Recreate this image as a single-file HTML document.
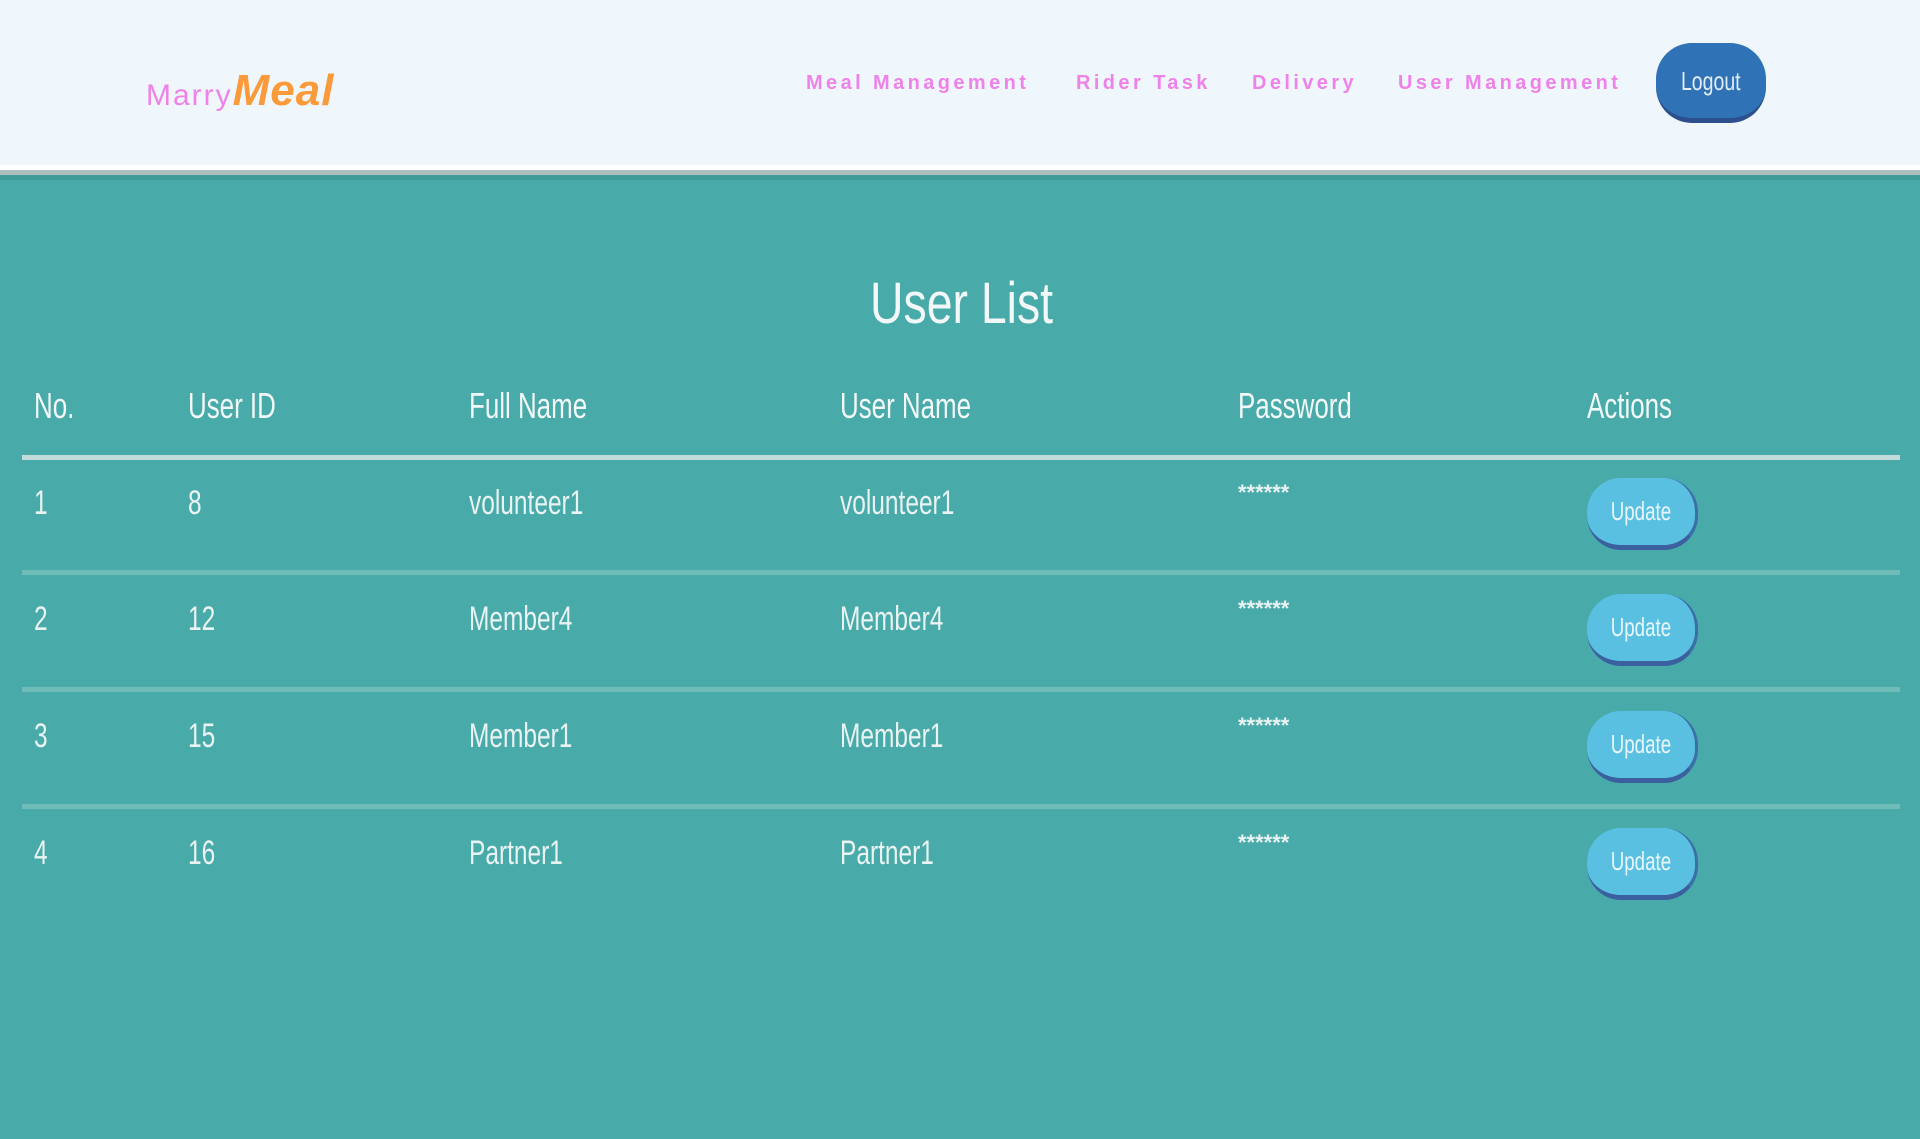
<!DOCTYPE html>
<html><head><meta charset="utf-8"><style>
*{margin:0;padding:0;box-sizing:border-box}
body{width:1920px;height:1139px;overflow:hidden;background:#48aaa9;font-family:"Liberation Sans",sans-serif;position:relative}
.hdr{position:absolute;left:0;top:0;width:1920px;height:165px;background:#eff7fd}
.g0{position:absolute;left:0;top:165px;width:1920px;height:5px;background:#ffffff}
.g1{position:absolute;left:0;top:170px;width:1920px;height:5px;background:#aebebe}
.g2{position:absolute;left:0;top:175px;width:1920px;height:5px;background:#3f9a98}
.a{position:absolute;white-space:nowrap}
.c{display:inline-block;transform:scaleX(.72);transform-origin:left center}
.nav{color:#ee82e8;font-size:20px;letter-spacing:3.4px;top:72px;font-weight:bold}
.t{color:#e8f3f2;font-size:34px}
.h{color:#f2f8f8;font-size:36px}
.line{position:absolute;left:22px;width:1878px;height:5px;background:#6fbcb9}
.btn{position:absolute;left:1587px;width:111px;height:72px;border-radius:34px;background:#5ac0e2;border-bottom:5px solid #3b5f9f;border-right:3px solid #3b6fa8;color:#e6f6fb;font-size:26px;text-align:center;line-height:66px}
</style></head><body>
<div class="hdr"></div><div class="g0"></div><div class="g1"></div><div class="g2"></div>
<div class="a" style="left:146px;top:66px;font-size:30px;color:#ee82e8;letter-spacing:2px">Marry<span style="color:#fb9a3a;font-weight:bold;font-style:italic;font-size:44px;letter-spacing:1px">Meal</span></div>
<div class="a nav" style="left:806px">Meal Management</div>
<div class="a nav" style="left:1076px">Rider Task</div>
<div class="a nav" style="left:1252px">Delivery</div>
<div class="a nav" style="left:1398px">User Management</div>
<div class="a" style="left:1656px;top:43px;width:110px;height:80px;border-radius:36px;background:#2f72b5;border-bottom:5px solid #2d4f8e;color:#e2ecf6;font-size:26px;text-align:center;line-height:76px"><span class="c" style="transform:scaleX(.75);transform-origin:center">Logout</span></div>
<div class="a" style="left:870px;top:270px;font-size:58px;color:#f2f8f8"><span class="c" style="transform:scaleX(.8)">User List</span></div>
<div class="a h" style="left:34px;top:385px"><span class="c">No.</span></div>
<div class="a h" style="left:188px;top:385px"><span class="c">User ID</span></div>
<div class="a h" style="left:469px;top:385px"><span class="c">Full Name</span></div>
<div class="a h" style="left:840px;top:385px"><span class="c">User Name</span></div>
<div class="a h" style="left:1238px;top:385px"><span class="c">Password</span></div>
<div class="a h" style="left:1587px;top:385px"><span class="c">Actions</span></div>
<div class="line" style="top:455px;background:#c2dcdc"></div>
<div class="line" style="top:570px"></div>
<div class="line" style="top:687px"></div>
<div class="line" style="top:804px"></div>

<div class="a t" style="left:34px;top:484px"><span class="c">1</span></div>
<div class="a t" style="left:188px;top:484px"><span class="c">8</span></div>
<div class="a t" style="left:469px;top:484px"><span class="c">volunteer1</span></div>
<div class="a t" style="left:840px;top:484px"><span class="c">volunteer1</span></div>
<div class="a t" style="left:1238px;top:480px;font-size:22px;font-weight:bold">******</div>
<div class="btn" style="top:478px"><span class="c" style="transform-origin:center">Update</span></div>

<div class="a t" style="left:34px;top:600px"><span class="c">2</span></div>
<div class="a t" style="left:188px;top:600px"><span class="c">12</span></div>
<div class="a t" style="left:469px;top:600px"><span class="c">Member4</span></div>
<div class="a t" style="left:840px;top:600px"><span class="c">Member4</span></div>
<div class="a t" style="left:1238px;top:596px;font-size:22px;font-weight:bold">******</div>
<div class="btn" style="top:594px"><span class="c" style="transform-origin:center">Update</span></div>

<div class="a t" style="left:34px;top:717px"><span class="c">3</span></div>
<div class="a t" style="left:188px;top:717px"><span class="c">15</span></div>
<div class="a t" style="left:469px;top:717px"><span class="c">Member1</span></div>
<div class="a t" style="left:840px;top:717px"><span class="c">Member1</span></div>
<div class="a t" style="left:1238px;top:713px;font-size:22px;font-weight:bold">******</div>
<div class="btn" style="top:711px"><span class="c" style="transform-origin:center">Update</span></div>

<div class="a t" style="left:34px;top:834px"><span class="c">4</span></div>
<div class="a t" style="left:188px;top:834px"><span class="c">16</span></div>
<div class="a t" style="left:469px;top:834px"><span class="c">Partner1</span></div>
<div class="a t" style="left:840px;top:834px"><span class="c">Partner1</span></div>
<div class="a t" style="left:1238px;top:830px;font-size:22px;font-weight:bold">******</div>
<div class="btn" style="top:828px"><span class="c" style="transform-origin:center">Update</span></div>
</body></html>
